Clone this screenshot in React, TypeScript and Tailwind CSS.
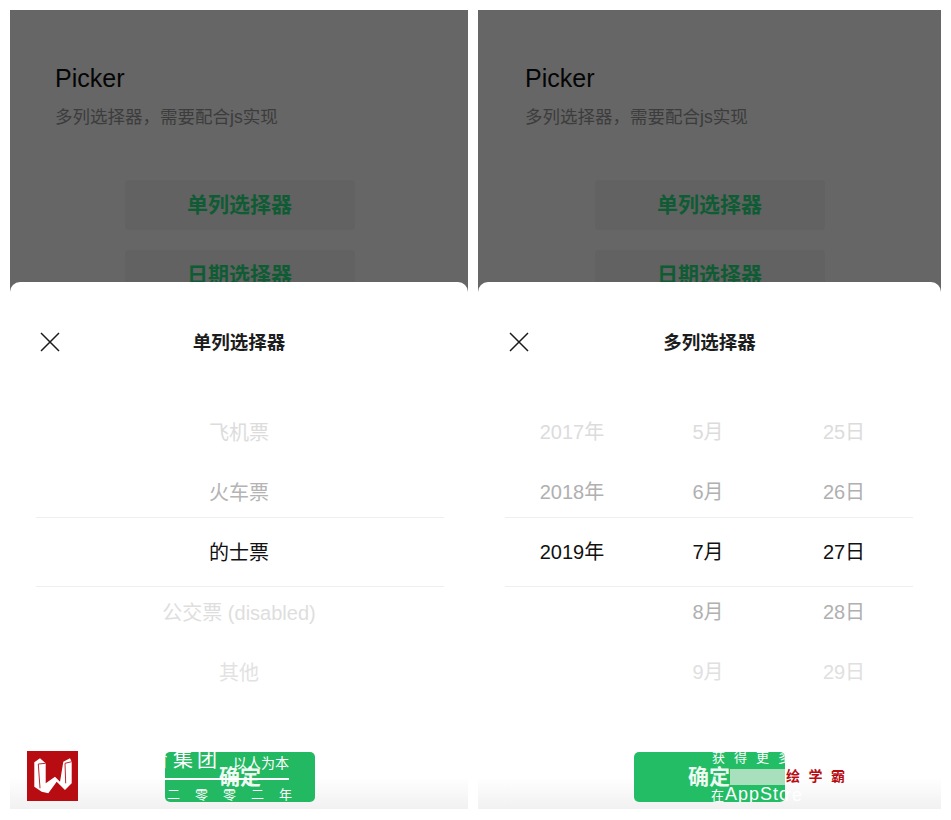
import React from "react";

type Row = { label: string; color: string };

const FONT = "font-['Liberation_Sans','Noto_Sans_CJK_SC',sans-serif]";

const singleRows: Row[] = [
  { label: "飞机票", color: "text-[#dcdcdc]" },
  { label: "火车票", color: "text-[#b4b4b4]" },
  { label: "的士票", color: "text-[#111111]" },
  { label: "公交票 (disabled)", color: "text-[#dedede]" },
  { label: "其他", color: "text-[#e2e2e2]" },
];

const shades = [
  "text-[#dcdcdc]",
  "text-[#b0b0b0]",
  "text-[#111111]",
  "text-[#b0b0b0]",
  "text-[#e0e0e0]",
];

const columns = [
  ["2017年", "2018年", "2019年", "", ""],
  ["5月", "6月", "7月", "8月", "9月"],
  ["25日", "26日", "27日", "28日", "29日"],
];

const CloseIcon = () => (
  <svg viewBox="0 0 20 20" className="h-5 w-5" fill="none" stroke="#1a1a1a" strokeWidth="1.5" aria-hidden>
    <path d="M1 1l18 18M19 1L1 19" />
  </svg>
);

const Logo = () => (
  <div className="absolute left-[27px] top-[751px] h-[50px] w-[51px] bg-[#b70c12]">
    <svg viewBox="0 0 51 50" className="h-[50px] w-[51px]" aria-hidden>
      <path
        d="M7.3 11.3L13 7.3l5.700 5V32.300L28 25.700l5 5 3.300-20L43 7.300l1.700 3.400V32.300L38 39l-8.300-8.300-8.400 11.600-6.600-1.600-7.400-5z"
        fill="#ffffff"
      />
      <path d="M11.300 13l1.700 24.300M11.300 13l7.400-.7M38 12.300l.7 20M38 12.300l6.700-1.600" fill="none" stroke="#b70c12" strokeWidth="0.9" />
    </svg>
  </div>
);

const Phone = ({
  width,
  title,
  contentLeft,
  buttonsRight,
  closeLeft,
  children,
  button,
}: {
  width: string;
  title: string;
  contentLeft: string;
  buttonsRight: string;
  closeLeft: string;
  children: React.ReactNode;
  button: React.ReactNode;
}) => (
  <div className={`relative flex h-[800px] flex-col overflow-hidden ${width}`}>
    <div className={`flex h-[290px] shrink-0 flex-col bg-[#666666] pt-[52px] ${contentLeft}`}>
      <div className="text-[25px] leading-[32px] text-[#050505]">Picker</div>
      <div className="mt-[10px] text-[17.5px] leading-[26px] text-[#3c3c3c]">多列选择器，需要配合js实现</div>
      <div className={`mt-[50px] flex flex-col items-center gap-5 ${buttonsRight}`}>
        <div className="flex h-[50px] w-[230px] items-center justify-center rounded bg-[#626262] text-[21px] font-bold text-[#0f5c34]">
          单列选择器
        </div>
        <div className="flex h-[50px] w-[230px] items-center justify-center rounded bg-[#626262] text-[21px] font-bold text-[#0f5c34]">
          日期选择器
        </div>
      </div>
    </div>
    <div className="relative -mt-[18px] flex flex-1 flex-col rounded-t-[10px] bg-white">
      <div className="relative mt-[30px] flex h-[60px] items-center justify-center pt-[1px]">
        <div className={`absolute top-[20px] ${closeLeft}`}>
          <CloseIcon />
        </div>
        <span className="text-[18.5px] font-bold text-[#1c1c1c]">{title}</span>
      </div>
      {children}
      <div className="absolute inset-x-0 bottom-[1px] h-[32px] bg-gradient-to-b from-white to-[#f1f1f1]" />
      <div className="mt-auto mb-2 flex justify-center">{button}</div>
    </div>
  </div>
);

const App = () => (
  <div className={`relative flex h-[820px] w-[951px] gap-[10px] overflow-hidden bg-white pl-[10px] pt-[10px] ${FONT}`}>
    <Phone
      width="w-[458px]"
      title="单列选择器"
      contentLeft="pl-[45px]"
      buttonsRight="pr-[44px]"
      closeLeft="left-[30px]"
      button={
        <div className="relative z-10 ml-[2px] flex h-[50px] w-[150px] items-center justify-center overflow-hidden rounded-[5px] bg-[#23b862] text-[21px] font-bold text-[#eef9f2]">
          确定
          <span className="absolute left-[-16px] top-[-4px] text-[20px] font-normal leading-[24px] tracking-[4px] whitespace-nowrap text-white">
            育集团
          </span>
          <span className="absolute left-[68px] top-[2px] text-[14px] font-normal leading-[18px] whitespace-nowrap text-white">
            以人为本
          </span>
          <div className="absolute left-0 top-[26px] h-[1.5px] w-[124px] bg-white" />
          <span className="absolute left-[2px] top-[35px] text-[13px] font-normal leading-[16px] tracking-[15px] whitespace-nowrap text-white">
            二零零二年
          </span>
        </div>
      }
    >
      <div className="relative ml-[26px] mr-[24px] mt-[31px] flex h-[300px] flex-col pr-[2px]">
        <div className="pointer-events-none absolute inset-x-0 top-[114px] h-[70px] border-y border-[#efefef]" />
        {singleRows.map((row) => (
          <div key={row.label} className={`flex h-[60px] items-center justify-center text-[20px] ${row.color}`}>
            {row.label}
          </div>
        ))}
      </div>
    </Phone>
    <Phone
      width="w-[463px]"
      title="多列选择器"
      contentLeft="pl-[47px]"
      buttonsRight="pr-[47px]"
      closeLeft="left-[31px]"
      button={
        <div className="relative z-10 flex h-[50px] w-[151px] items-center overflow-hidden rounded-[5px] bg-[#23bd65] pl-[54px] text-[21px] font-bold text-[#eef9f2]">
          确定
          <span className="absolute left-[78px] top-[-2px] text-[13px] font-normal leading-[16px] tracking-[9px] whitespace-nowrap text-white">
            获得更多
          </span>
          <div className="absolute left-[96px] right-0 top-[17px] h-[16px] bg-[#a8e0bd]" />
          <span className="absolute left-[77px] top-[33px] text-[15px] font-normal leading-[18px] tracking-[1px] whitespace-nowrap text-white">
            <span className="text-[13px]">在</span>
            <span className="text-[18px]">AppSto</span>
          </span>
        </div>
      }
    >
      <div className="relative ml-[26px] mr-[29px] mt-[30px] grid h-[300px] grid-cols-3">
        <div className="pointer-events-none absolute left-[1px] right-[-1px] top-[115px] h-[70px] border-y border-[#efefef]" />
        {columns.map((column, c) => (
          <div key={c} className="flex flex-col">
            {column.map((label, r) => (
              <div key={r} className={`flex h-[60px] items-center justify-center text-[20px] ${shades[r]}`}>
                {label}
              </div>
            ))}
          </div>
        ))}
      </div>
    </Phone>
    <Logo />
    <span className="absolute left-[786px] top-[767px] text-[14px] font-bold leading-[18px] tracking-[8.500px] whitespace-nowrap text-[#b70c12]">
      绘学霸
    </span>
    <span className="absolute left-[785px] top-[785px] text-[18px] leading-[20px] tracking-[1px] text-white">
      re
    </span>
  </div>
);

export default App;
